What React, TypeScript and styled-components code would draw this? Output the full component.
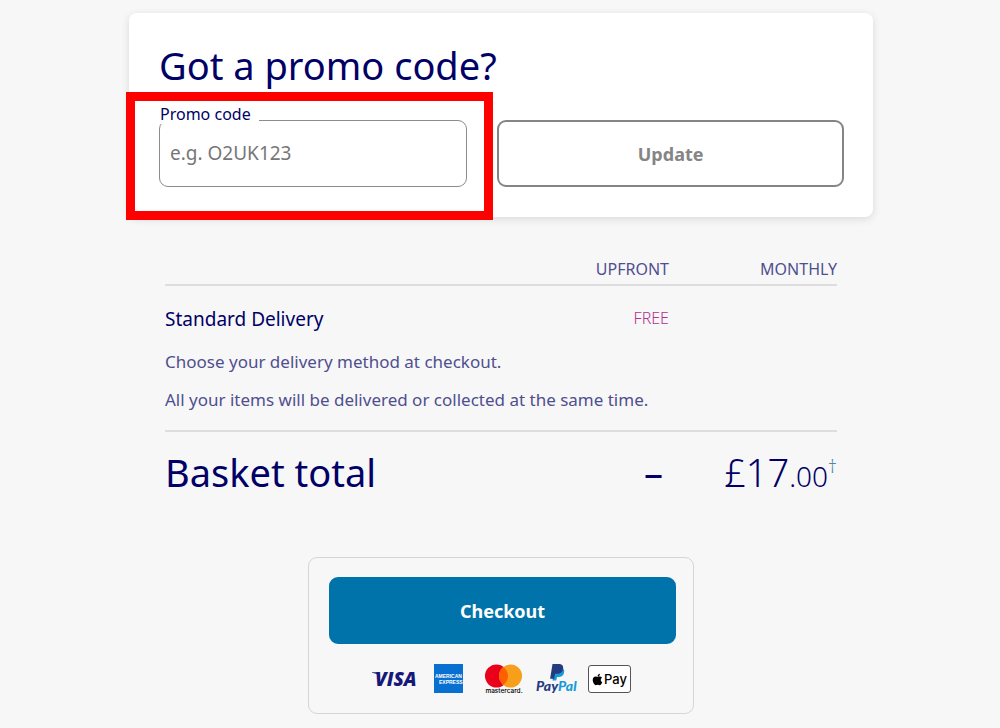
import React from "react";
import styled, { createGlobalStyle } from "styled-components";
import { FaApple } from "react-icons/fa";

const navy = "#000066";
const muted = "#4f4f8f";

const GlobalStyle = createGlobalStyle`
  *, *::before, *::after { box-sizing: border-box; }
  body {
    margin: 0;
    background: #f7f7f7;
    color: ${navy};
    font-family: "Noto Sans", "Open Sans", sans-serif;
    font-size: 16px;
  }
`;

const Page = styled.main`
  padding: 13px 127px 15px 129px;
`;

const PromoCard = styled.section`
  padding: 26px 29px 30px 30px;
  background: #ffffff;
  border-radius: 8px;
  box-shadow: 0 2px 8px rgba(0, 0, 0, 0.12);
`;

const Heading = styled.h1`
  margin: 0;
  font-size: 38px;
  line-height: 52px;
  font-weight: 400;
`;

const PromoForm = styled.form`
  display: grid;
  grid-template-columns: 8fr 9fr;
  gap: 30px;
  padding-top: 29px;
`;

const Field = styled.div`
  position: relative;
`;

const FieldLabel = styled.label`
  position: absolute;
  top: -16px;
  left: 0;
  padding: 0 8px 0 1px;
  background: #ffffff;
  font-size: 16px;
  line-height: 20px;
`;

const CodeInput = styled.input`
  display: block;
  width: 100%;
  height: 67px;
  padding: 0 10px 2px;
  border: 1px solid #8c8c8c;
  border-radius: 9px;
  background: #ffffff;
  color: ${navy};
  font-family: inherit;
  font-size: 19px;

  &::placeholder {
    color: #767676;
    opacity: 1;
  }
`;

const Highlight = styled.div`
  position: absolute;
  inset: -28px -26px -33px -33px;
  border: 9px solid #ff0000;
  pointer-events: none;
`;

const Button = styled.button<{ $primary?: boolean }>`
  display: block;
  width: 100%;
  height: 67px;
  border: 2px solid ${(p) => (p.$primary ? "#0073ab" : "#858585")};
  border-radius: 9px;
  background: ${(p) => (p.$primary ? "#0073ab" : "#ffffff")};
  color: ${(p) => (p.$primary ? "#ffffff" : "#858585")};
  font-family: inherit;
  font-size: 18px;
  font-weight: 700;
`;

const Summary = styled.section`
  padding: 34px 36px 0;
`;

const BasketTable = styled.table`
  width: 100%;
  border-collapse: separate;
  border-spacing: 0;
  table-layout: fixed;
`;

const ColumnHead = styled.th<{ $width: string }>`
  width: ${(p) => p.$width};
  padding: 4px 0 1px;
  border-bottom: 2px solid #dedede;
  color: ${muted};
  font-size: 16px;
  line-height: 28px;
  font-weight: 400;
  text-align: right;
`;

const ItemName = styled.th`
  padding: 20px 0 11px;
  font-size: 19px;
  line-height: 26px;
  font-weight: 400;
  text-align: left;
`;

const ItemPrice = styled.td`
  padding: 19px 0 12px;
  color: #b3328f;
  font-size: 16px;
  line-height: 26px;
  font-weight: 300;
  text-align: right;
`;

const Note = styled.td<{ $last?: boolean }>`
  padding: 0 0 ${(p) => (p.$last ? "11px" : "0")};
  border-bottom: ${(p) => (p.$last ? "2px solid #dedede" : "0")};
  color: ${muted};
  font-size: 17px;
  line-height: 38px;
`;

const TotalLabel = styled.th`
  padding: 14px 0 0;
  font-size: 38px;
  line-height: 52px;
  font-weight: 400;
  text-align: left;
  vertical-align: baseline;
`;

const TotalValue = styled.td<{ $inset?: boolean }>`
  padding: 14px ${(p) => (p.$inset ? "6px" : "0")} 0 0;
  font-size: 38px;
  line-height: 52px;
  font-weight: ${(p) => (p.$inset ? 400 : 300)};
  text-align: right;
  vertical-align: baseline;
  white-space: nowrap;
`;

const Pence = styled.span`
  font-size: 28px;
`;

const Dagger = styled.sup`
  color: #4a86a8;
  font-size: 18px;
  line-height: 0;
`;

const CheckoutBox = styled.section`
  width: 52%;
  min-width: 320px;
  margin: 55px auto 0;
  padding: 19px 17px 18px 20px;
  border: 1px solid #d5d5d5;
  border-radius: 9px;
`;

const Payments = styled.div`
  display: flex;
  justify-content: center;
  align-items: center;
  gap: 10px;
  padding: 19px 4px 0 0;
`;

const ApplePay = styled.span`
  display: flex;
  align-items: center;
  justify-content: center;
  width: 43px;
  height: 28px;
  border: 1px solid #555555;
  border-radius: 3px;
  background: #ffffff;
  color: #000000;
  font-family: Inter, sans-serif;
  font-size: 13px;
  font-weight: 500;
`;

const VisaLogo = () => (
  <svg width="45" height="32" viewBox="0 0 45 32" role="img" aria-label="Visa">
    <text x="4" y="23" fill="#17197a" fontFamily="Open Sans, sans-serif" fontSize="19" fontWeight="800" fontStyle="italic">VISA</text>
    <path d="M1 9.300h6.500l2 5C7 11.300 4 10.300 1 9.800z" fill="#17197a" />
  </svg>
);

const AmexLogo = () => (
  <svg width="49" height="32" viewBox="0 0 49 32" role="img" aria-label="American Express">
    <rect x="8" y="1" width="29" height="29" fill="#0870d0" />
    <g fill="#ffffff" fontFamily="Liberation Sans, sans-serif" fontSize="5" fontWeight="700">
      <text x="9" y="15">AMERICAN</text>
      <text x="13" y="21">EXPRESS</text>
    </g>
  </svg>
);

const MastercardLogo = () => (
  <svg width="41" height="32" viewBox="0 0 41 32" role="img" aria-label="Mastercard">
    <circle cx="11.500" cy="13" r="11.500" fill="#eb001b" />
    <circle cx="25.500" cy="13" r="11.500" fill="#f79e1b" />
    <path d="M18.500 3.900a11.500 11.500 0 0 1 0 18.200a11.500 11.500 0 0 1 0-18.200z" fill="#ff5f00" />
    <text x="19" y="30" textAnchor="middle" fill="#000000" fontFamily="Inter, sans-serif" fontSize="6.500" fontWeight="500">mastercard.</text>
  </svg>
);

const PayPalLogo = () => (
  <svg width="42" height="32" viewBox="0 0 42 32" role="img" aria-label="PayPal">
    <path d="M18 5h8.500c2 1.500 2 3.500 1.500 5c-.8 3-3 4-5.500 4h-1.500l-.8 3.500h-3.700z" fill="#179bd7" />
    <path d="M16.500 1h6c3.500 0 5.200 1.800 4.600 5c-.7 3.500-3 4.800-6 4.800h-2l-1 5h-4z" fill="#253b80" />
    <g fontFamily="Lato, sans-serif" fontSize="14" fontWeight="900" fontStyle="italic">
      <text x="0" y="28" fill="#253b80">Pay<tspan fill="#179bd7">Pal</tspan></text>
    </g>
  </svg>
);

export default function App() {
  return (
    <>
      <GlobalStyle />
      <Page>
        <PromoCard>
          <Heading>Got a promo code?</Heading>
          <PromoForm onSubmit={(e) => e.preventDefault()}>
            <Field>
              <CodeInput id="promo" type="text" placeholder="e.g. O2UK123" />
              <FieldLabel htmlFor="promo">Promo code</FieldLabel>
              <Highlight />
            </Field>
            <Button type="submit">Update</Button>
          </PromoForm>
        </PromoCard>
        <Summary>
          <BasketTable>
            <thead>
              <tr>
                <ColumnHead $width="55%" aria-label="Item" />
                <ColumnHead $width="20%" scope="col">UPFRONT</ColumnHead>
                <ColumnHead $width="25%" scope="col">MONTHLY</ColumnHead>
              </tr>
            </thead>
            <tbody>
              <tr>
                <ItemName scope="row">Standard Delivery</ItemName>
                <ItemPrice>FREE</ItemPrice>
                <ItemPrice />
              </tr>
              <tr>
                <Note colSpan={3}>Choose your delivery method at checkout.</Note>
              </tr>
              <tr>
                <Note colSpan={3} $last>All your items will be delivered or collected at the same time.</Note>
              </tr>
            </tbody>
            <tfoot>
              <tr>
                <TotalLabel scope="row">Basket total</TotalLabel>
                <TotalValue $inset>–</TotalValue>
                <TotalValue>£17<Pence>.00</Pence><Dagger>†</Dagger></TotalValue>
              </tr>
            </tfoot>
          </BasketTable>
        </Summary>
        <CheckoutBox>
          <Button type="button" $primary>Checkout</Button>
          <Payments>
            <VisaLogo />
            <AmexLogo />
            <MastercardLogo />
            <PayPalLogo />
            <ApplePay><FaApple size={13} />Pay</ApplePay>
          </Payments>
        </CheckoutBox>
      </Page>
    </>
  );
}
